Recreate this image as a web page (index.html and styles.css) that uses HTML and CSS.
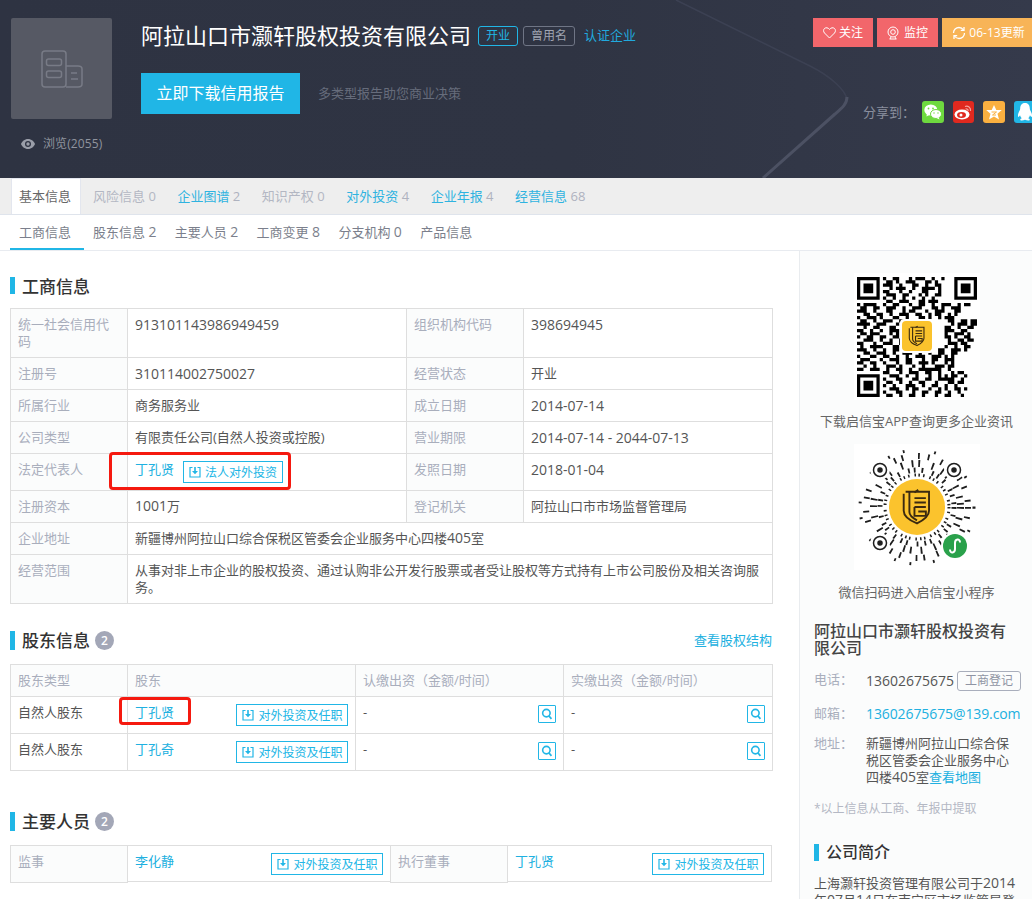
FILE: index.html
```html
<!DOCTYPE html>
<html lang="zh-CN">
<head>
<meta charset="utf-8">
<title>阿拉山口市灏轩股权投资有限公司</title>
<link rel="stylesheet" href="styles.css">
</head>
<body>
<svg class="defs" width="0" height="0" aria-hidden="true">
  <symbol id="shield" viewBox="0 0 30 30">
    <g fill="none" stroke="#3b2a10" stroke-width="1.5">
      <path d="M6 3H24.500V18C24.500 23 19 26 15 28C10 26 4.500 23 4.500 18V4.500"/>
      <path d="M9 3V19C9 22 12 24 15 25.500"/>
      <path d="M13 3.500L16 1.500M13 8H22M13 11.500H22M13 15H22M13 15V22H22V18.500H16"/>
    </g>
  </symbol>
  <symbol id="dl" viewBox="0 0 12 12">
    <path d="M3.500 1.500H1V11H11V1.500H8.500" fill="none" stroke="currentColor" stroke-width="1.200"/>
    <path d="M5.200 1H6.800V5H9L6 8.200L3 5H5.200Z" fill="currentColor"/>
  </symbol>
  <symbol id="mag" viewBox="0 0 18 18">
    <circle cx="8.300" cy="8" r="4.200" fill="none" stroke="currentColor" stroke-width="1.800"/>
    <path d="M11 11L14 14.500" stroke="currentColor" stroke-width="2"/>
  </symbol>
</svg>

<header class="hero">
  <svg class="hero-bg" viewBox="0 0 1032 178" aria-hidden="true">
    <path d="M676 0L810 66C830 76 846 90 847 100C847 104 842 108 835 114L763 178" fill="none" stroke="#3c4153" stroke-width="1.500"/>
    <path d="M847 97C847 104 842 108 835 114L763 178" fill="none" stroke="#4c5163" stroke-width="3"/>
  </svg>
  <div class="hero-left">
    <div class="logo">
      <svg width="42" height="38" viewBox="0 0 42 38" fill="none" stroke="#787b86" stroke-width="1.500">
        <rect x="1" y="1" width="24" height="36" rx="3"/>
        <rect x="5.500" y="9" width="15" height="6.500" rx="2"/>
        <rect x="5.500" y="21" width="15" height="6.500" rx="2"/>
        <path d="M25 16H37C39 16 41 17 41 19V34C41 36 39 37 37 37H25"/>
        <path d="M30 23H36M30 29H37"/>
      </svg>
    </div>
    <div class="views">
      <svg width="14" height="10" viewBox="0 0 14 10"><path d="M7 0C3.500 0 1 2.500 0 5C1 7.500 3.500 10 7 10S13 7.500 14 5C13 2.500 10.500 0 7 0Z" fill="#9a9ea9"/><circle cx="7" cy="5" r="3" fill="#2e3342"/><circle cx="7" cy="5" r="1.700" fill="#9a9ea9"/></svg>
      <span>浏览(2055)</span>
    </div>
  </div>
  <div class="hero-main">
    <div class="title-row">
      <h1 class="company">阿拉山口市灏轩股权投资有限公司</h1>
      <span class="tag tag-blue">开业</span>
      <span class="tag tag-gray">曾用名</span>
      <a class="verify">认证企业</a>
    </div>
    <div class="cta-row">
      <a class="cta">立即下载信用报告</a>
      <span class="cta-hint">多类型报告助您商业决策</span>
    </div>
  </div>
  <div class="hero-right">
    <div class="actions">
      <a class="act act-red act-follow">
        <svg width="13" height="12" viewBox="0 0 13 12"><path d="M6.500 11L1.500 6C.2 4.600.3 2.500 1.600 1.400C3 .3 5 .6 6.500 2.400C8 .6 10 .3 11.400 1.400C12.700 2.500 12.800 4.600 11.500 6Z" fill="none" stroke="#fff"/></svg>
        关注
      </a>
      <a class="act act-red act-watch">
        <svg width="12" height="14" viewBox="0 0 12 14" fill="none" stroke="#fff"><circle cx="6" cy="6" r="5"/><circle cx="6" cy="6" r="2.300"/><path d="M2.500 13H9.500M4 11L3 13M8 11L9 13"/></svg>
        监控
      </a>
      <a class="act act-orange">
        <svg width="14" height="14" viewBox="0 0 14 14" fill="none" stroke="#fff" stroke-width="1.300"><path d="M1.500 7C1.500 3.800 4 1.500 7 1.500C9 1.500 10.500 2.500 11.500 4M12.500 7C12.500 10.200 10 12.500 7 12.500C5 12.500 3.500 11.500 2.500 10"/><path d="M12 1V4.300H8.800M2 13V9.700H5.200"/></svg>
        06-13更新
      </a>
    </div>
    <div class="share">
      <span class="share-label">分享到：</span>
      <a class="soc soc-wx"><svg width="18" height="16" viewBox="0 0 18 16" fill="#fff"><ellipse cx="6.800" cy="6" rx="6.500" ry="5.500"/><path d="M3 9L2.500 12.500L6 10.500Z"/><ellipse cx="12" cy="10" rx="5.500" ry="4.500" stroke="#6ed93f"/><path d="M14.500 13L15.500 15.500L12.500 14Z"/><circle cx="4.500" cy="4.500" r=".9" fill="#6ed93f"/><circle cx="9" cy="4.500" r=".9" fill="#6ed93f"/><circle cx="10" cy="9" r=".7" fill="#6ed93f"/><circle cx="14" cy="9" r=".7" fill="#6ed93f"/></svg></a>
      <a class="soc soc-wb"><svg width="19" height="16" viewBox="0 0 19 16"><ellipse cx="8" cy="10.500" rx="7.500" ry="5" fill="#fff"/><ellipse cx="7.500" cy="11" rx="4.500" ry="3" fill="#e0291f"/><circle cx="7" cy="11" r="1.500" fill="#fff"/><path d="M11 2.500C14 1.500 17 3.500 16.500 7M11.500 5C13 4.500 14.500 5.500 14 7" fill="none" stroke="#f3a6a0" stroke-width="1.200"/></svg></a>
      <a class="soc soc-star"><svg width="16" height="15" viewBox="0 0 16 15"><path d="M8 0L10.300 5H15.800L11.500 8.700L13 14.500L8 11.500L3 14.500L4.500 8.700L.2 5H5.700Z" fill="#fff"/><path d="M5.500 7H10.500L6.500 10H10" fill="none" stroke="#fbb040"/></svg></a>
      <a class="soc soc-qq"><svg width="16" height="18" viewBox="0 0 16 18" fill="#fff"><path d="M8 0C4.500 0 3.200 2.500 3.200 5.500C3.200 7 2 8.500 1.300 10.500C.7 12.500 1 14 1.500 14C2 14 2.700 13 3 12.300C3.300 13.500 4 14.500 4.800 15.200C3.800 15.600 3 16.200 3.300 17C3.800 18 6.500 17.500 8 16.800C9.500 17.500 12.200 18 12.700 17C13 16.200 12.200 15.600 11.200 15.200C12 14.500 12.700 13.500 13 12.300C13.300 13 14 14 14.500 14C15 14 15.300 12.500 14.700 10.500C14 8.500 12.800 7 12.800 5.500C12.800 2.500 11.500 0 8 0Z"/></svg></a>
    </div>
  </div>
</header>

<nav class="tabs">
  <a class="tab tab-active">基本信息</a>
  <a class="tab tab-off">风险信息 0</a>
  <a class="tab tab-on">企业图谱 <span class="count">2</span></a>
  <a class="tab tab-off">知识产权 0</a>
  <a class="tab tab-on">对外投资 <span class="count">4</span></a>
  <a class="tab tab-on">企业年报 <span class="count">4</span></a>
  <a class="tab tab-on">经营信息 <span class="count">68</span></a>
</nav>
<nav class="subtabs">
  <a class="subtab subtab-active">工商信息</a>
  <a class="subtab">股东信息 <span class="num">2</span></a>
  <a class="subtab">主要人员 <span class="num">2</span></a>
  <a class="subtab">工商变更 <span class="num">8</span></a>
  <a class="subtab">分支机构 <span class="num">0</span></a>
  <a class="subtab">产品信息</a>
</nav>

<div class="page">
  <main class="content">
    <section class="section section-a">
      <h2 class="sec-title">工商信息</h2>
      <table class="grid">
        <colgroup><col class="c-117"><col class="c-279"><col class="c-117"><col class="c-249"></colgroup>
        <tr><th>统一社会信用代码</th><td class="num-cell">913101143986949459</td><th>组织机构代码</th><td class="num-cell">398694945</td></tr>
        <tr><th>注册号</th><td class="num-cell">310114002750027</td><th>经营状态</th><td>开业</td></tr>
        <tr><th>所属行业</th><td>商务服务业</td><th>成立日期</th><td class="num-cell">2014-07-14</td></tr>
        <tr><th>公司类型</th><td>有限责任公司(自然人投资或控股)</td><th>营业期限</th><td class="num-cell">2014-07-14 - 2044-07-13</td></tr>
        <tr><th>法定代表人</th>
          <td class="anchor">
            <div class="legal"><a class="link">丁孔贤</a><a class="btn"><svg class="dl"><use href="#dl"/></svg>法人对外投资</a></div>
            <span class="mark mark-legal"></span>
          </td>
          <th>发照日期</th><td class="num-cell">2018-01-04</td></tr>
        <tr><th>注册资本</th><td><span class="num">1001</span>万</td><th>登记机关</th><td>阿拉山口市市场监督管理局</td></tr>
        <tr><th>企业地址</th><td colspan="3">新疆博州阿拉山口综合保税区管委会企业服务中心四楼<span class="num">405</span>室</td></tr>
        <tr><th>经营范围</th><td colspan="3">从事对非上市企业的股权投资、通过认购非公开发行股票或者受让股权等方式持有上市公司股份及相关咨询服务。</td></tr>
      </table>
    </section>

    <section class="section section-b">
      <div class="sec-head">
        <h2 class="sec-title">股东信息<span class="badge">2</span></h2>
        <a class="link">查看股权结构</a>
      </div>
      <table class="grid">
        <colgroup><col class="c-117"><col class="c-228"><col class="c-208"><col class="c-209"></colgroup>
        <tr><th>股东类型</th><th>股东</th><th>认缴出资（金额/时间）</th><th>实缴出资（金额/时间）</th></tr>
        <tr><td>自然人股东</td>
          <td class="anchor"><div class="split"><a class="link">丁孔贤</a><a class="btn"><svg class="dl"><use href="#dl"/></svg>对外投资及任职</a></div><span class="mark mark-holder"></span></td>
          <td><div class="split"><span>-</span><a class="mag"><svg><use href="#mag"/></svg></a></div></td>
          <td><div class="split"><span>-</span><a class="mag"><svg><use href="#mag"/></svg></a></div></td></tr>
        <tr><td>自然人股东</td>
          <td><div class="split"><a class="link">丁孔奇</a><a class="btn"><svg class="dl"><use href="#dl"/></svg>对外投资及任职</a></div></td>
          <td><div class="split"><span>-</span><a class="mag"><svg><use href="#mag"/></svg></a></div></td>
          <td><div class="split"><span>-</span><a class="mag"><svg><use href="#mag"/></svg></a></div></td></tr>
      </table>
    </section>

    <section class="section">
      <h2 class="sec-title">主要人员<span class="badge">2</span></h2>
      <div class="people">
        <div class="p-label">监事</div>
        <div class="p-value p-value-a"><a class="link">李化静</a><a class="btn"><svg class="dl"><use href="#dl"/></svg>对外投资及任职</a></div>
        <div class="p-label">执行董事</div>
        <div class="p-value p-value-b"><a class="link">丁孔贤</a><a class="btn"><svg class="dl"><use href="#dl"/></svg>对外投资及任职</a></div>
      </div>
    </section>
  </main>

  <aside class="side">
    <div class="code">
      <svg class="code-svg" viewBox="0 0 126 127" aria-hidden="true">
        <g transform="translate(3 4) scale(3.243)">
          <path fill-rule="evenodd" d="M0 0h7v7h-7zM1 1v5h5v-5zM2 2h3v3h-3zM30 0h7v7h-7zM31 1v5h5v-5zM32 2h3v3h-3zM0 30h7v7h-7zM1 31v5h5v-5zM2 32h3v3h-3z"/>
          <path fill="none" stroke="#000" d="M8 .5h1m2 0h2m3 0h1m1 0h3m2 0h1m2 0h1
            M9 1.500h2m1 0h1m2 0h3m3 0h2m1 0h1
            M8 2.500h3m2 0h1m3 0h2m2 0h1m2 0h2
            M10 3.500h1m1 0h3m2 0h1m2 0h4m1 0h1
            M8 4.500h2m3 0h1m2 0h1m3 0h2m3 0h1
            M9 5.500h3m2 0h2m3 0h1m1 0h1m2 0h2
            M8 6.500h1m2 0h1m2 0h1m2 0h1m2 0h1m2 0h1
            M9 7.500h2m2 0h3m3 0h2m1 0h3
            M0 8.500h1m1 0h4m2 0h1m2 0h2m3 0h1m2 0h2m2 0h1m2 0h3m2 0h1m1 0h2
            M1 9.500h2m2 0h2m2 0h3m2 0h1m2 0h3m3 0h2m1 0h1m2 0h3
            M0 10.500h3m2 0h1m3 0h2m3 0h1m1 0h2m3 0h1m2 0h3m3 0h2
            M2 11.500h2m2 0h2m2 0h1m2 0h3m2 0h2m2 0h1m1 0h2m2 0h1m1 0h1
            M0 12.500h1m2 0h3m1 0h1m3 0h2m2 0h1m3 0h2m1 0h1m2 0h1m1 0h3
            M1 13.500h2m2 0h1m2 0h3m2 0h2m13 0h2m2 0h2m1 0h2
            M0 14.500h4m2 0h3m3 0h1m16 0h1m1 0h3m1 0h2
            M2 15.500h1m2 0h2m3 0h2m15 0h2m2 0h1m2 0h2
            M0 16.500h2m2 0h1m2 0h1m2 0h3m14 0h3m2 0h2
            M1 17.500h2m1 0h3m3 0h1m1 0h1m14 0h1m2 0h3m1 0h1
            M0 18.500h1m2 0h2m2 0h2m2 0h2m14 0h2m1 0h1m2 0h2
            M2 19.500h3m2 0h1m2 0h1m2 0h1m14 0h1m2 0h2m1 0h2
            M0 20.500h2m3 0h1m2 0h3m2 0h1m14 0h3m1 0h2
            M1 21.500h1m2 0h4m3 0h2m14 0h1m2 0h1m2 0h2
            M0 22.500h3m2 0h1m2 0h1m2 0h2m2 0h1m9 0h2m2 0h3m1 0h1
            M2 23.500h2m2 0h3m2 0h1m2 0h3m2 0h1m2 0h1m2 0h2m2 0h2
            M0 24.500h1m3 0h2m2 0h2m2 0h1m2 0h1m2 0h3m2 0h3m1 0h1m1 0h1
            M1 25.500h3m3 0h1m2 0h3m2 0h2m3 0h1m2 0h2m2 0h3
            M0 26.500h2m2 0h2m2 0h1m3 0h1m2 0h2m2 0h3m1 0h1m3 0h1m1 0h1
            M2 27.500h1m2 0h1m3 0h3m1 0h1m3 0h1m2 0h1m3 0h3m1 0h2
            M0 28.500h2m2 0h3m2 0h1m2 0h2m2 0h1m2 0h7m2 0h1
            M8 29.500h2m3 0h1m2 0h3m2 0h2m2 0h1m3 0h1m1 0h2
            M10 30.500h3m2 0h1m2 0h1m3 0h1m2 0h1m1 0h1m1 0h2m2 0h1
            M8 31.500h1m3 0h2m3 0h2m2 0h2m2 0h5m2 0h1
            M9 32.500h2m2 0h1m2 0h1m2 0h2m3 0h1m3 0h2m1 0h2
            M8 33.500h1m2 0h1m3 0h3m2 0h1m2 0h2m2 0h1m2 0h1
            M10 34.500h3m2 0h1m1 0h2m3 0h1m2 0h1m1 0h1m2 0h2m1 0h1
            M8 35.500h1m3 0h2m3 0h1m2 0h2m2 0h2m2 0h1m2 0h1
            M9 36.500h2m2 0h1m2 0h2m2 0h1m3 0h1m2 0h2m3 0h1"/>
        </g>
        <rect x="46" y="46" width="34" height="34" rx="4" fill="#fff"/>
        <rect x="48" y="48" width="30" height="30" rx="4" fill="#fbc32d"/>
        <use href="#shield" x="52" y="52" width="22" height="22"/>
      </svg>
    </div>
    <p class="code-cap cap-app">下载启信宝APP查询更多企业资讯</p>
    <div class="code code-mini">
      <svg class="code-svg" viewBox="0 0 126 126" aria-hidden="true">
        <g fill="none" stroke="#1e1e1e">
          <circle cx="63" cy="63" r="32" stroke-width="3" stroke-dasharray="1.500 3.200 1.500 5 1.500 2.500"/>
          <circle cx="63" cy="63" r="37" stroke-width="5" stroke-dasharray="1.800 6 1.800 9 1.800 4"/>
          <circle cx="63" cy="63" r="43.500" stroke-width="7" stroke-dasharray="1.800 9 1.800 5 1.800 12"/>
          <circle cx="63" cy="63" r="51" stroke-width="6" stroke-dasharray="1.800 8 1.800 12 1.800 6 1.800 15"/>
          <circle cx="63" cy="63" r="57" stroke-width="3" stroke-dasharray="1.800 22 1.800 14 1.800 30"/>
        </g>
        <g fill="#fff" stroke="#1e1e1e" stroke-width="1.500">
          <circle cx="26" cy="26" r="10" stroke="none"/><circle cx="26" cy="26" r="6.500"/><circle cx="26" cy="26" r="2" fill="#1e1e1e"/>
          <circle cx="100" cy="26" r="10" stroke="none"/><circle cx="100" cy="26" r="6.500"/><circle cx="100" cy="26" r="2" fill="#1e1e1e"/>
          <circle cx="26" cy="99" r="10" stroke="none"/><circle cx="26" cy="99" r="6.500"/><circle cx="26" cy="99" r="2" fill="#1e1e1e"/>
        </g>
        <circle cx="63" cy="63" r="28" fill="#fbc32d"/>
        <use href="#shield" x="44" y="44" width="38" height="38"/>
        <circle cx="101" cy="102" r="14" fill="#fff"/>
        <circle cx="101" cy="102" r="12" fill="#2aa14b"/>
        <path d="M96 105.500C96 110 101 109 101 105V99C101 95 106 94 106 98.500" fill="none" stroke="#fff" stroke-width="2"/>
      </svg>
    </div>
    <p class="code-cap cap-mini">微信扫码进入启信宝小程序</p>

    <h3 class="side-name">阿拉山口市灏轩股权投资有限公司</h3>
    <dl class="contact">
      <div class="c-row c-phone"><dt>电话：</dt><dd><span class="num">13602675675</span><span class="src">工商登记</span></dd></div>
      <div class="c-row c-mail"><dt>邮箱：</dt><dd><a class="link mail">13602675675@139.com</a></dd></div>
      <div class="c-row"><dt>地址：</dt><dd>新疆博州阿拉山口综合保税区管委会企业服务中心四楼<span class="num">405</span>室<a class="link">查看地图</a></dd></div>
    </dl>
    <p class="note">*以上信息从工商、年报中提取</p>
    <h2 class="sec-title side-title">公司简介</h2>
    <p class="intro">上海灏轩投资管理有限公司于<span class="num">2014</span>年<span class="num">07</span>月<span class="num">14</span>日在南宁区市场监管局登记成立。</p>
  </aside>
</div>
</body>
</html>
```

FILE: styles.css
```css
* { box-sizing: border-box; }
html, body { margin: 0; height: 899px; overflow: hidden; background: #fff; }
body {
  font-family: "Open Sans", "Noto Sans CJK SC", sans-serif;
  font-size: 13px;
  line-height: 17px;
  color: #555;
}
a { text-decoration: none; }
h1, h2, h3, p, dl, dd { margin: 0; font-weight: 400; }
.defs { position: absolute; }
.num { font-size: 14px; line-height: 1; }
.num-cell { font-size: 14px; }

/* hero */
.hero {
  position: relative;
  display: flex;
  align-items: flex-start;
  height: 178px;
  padding: 18px 0 0 11px;
  overflow: hidden;
  background: linear-gradient(90deg, #2e3342 0%, #2f3443 55%, #353a4b 100%);
}
.hero-bg { position: absolute; left: 0; top: 0; width: 1032px; height: 178px; }
.hero-left, .hero-main, .hero-right { position: relative; flex: none; }
.hero-left { width: 101px; }
.logo {
  display: flex; align-items: center; justify-content: center;
  width: 101px; height: 101px; border-radius: 2px; background: #565964;
}
.views { display: flex; align-items: center; gap: 8px; margin: 16px 0 0 10px; color: #8f939e; font-size: 12px; letter-spacing: .1px; white-space: nowrap; }
.hero-main { width: 672px; margin-left: 29px; }
.title-row { display: flex; align-items: center; height: 34px; white-space: nowrap; }
.company { font-size: 22px; line-height: 34px; color: #fff; }
.tag { display: inline-block; height: 20px; margin-top: 1px; line-height: 18px; padding: 0 7px; border: 1px solid; border-radius: 3px; font-size: 12px; }
.tag-blue { margin-left: 7px; color: #21b6e6; border-color: #21b6e6; }
.tag-gray { margin-left: 5px; color: #a0a5b2; border-color: #6f7585; }
.verify { margin-left: 9px; color: #21a9de; }
.cta-row { display: flex; align-items: center; margin-top: 21px; }
.cta { width: 159px; height: 41px; line-height: 41px; text-align: center; font-size: 16px; color: #fff; background: #20b6e6; }
.cta-hint { margin-left: 18px; color: #666c7b; }
.hero-right { width: 225px; }
.actions { display: flex; gap: 4px; }
.act {
  display: flex; align-items: center; justify-content: center; gap: 3px;
  height: 29px; font-size: 12px; color: #fff; white-space: nowrap; flex: none;
}
.act-red { background: #f2666b; }
.act-follow { width: 60px; }
.act-watch { width: 61px; gap: 5px; }
.act-orange { width: 93px; background: #f8b457; }
.share { display: flex; align-items: center; margin: 54px 0 0 50px; }
.share-label { flex: none; width: 59px; color: #8a8f9e; white-space: nowrap; }
.soc { display: flex; align-items: center; justify-content: center; flex: none; width: 22px; height: 22px; margin-right: 9px; border-radius: 3px; }
.soc-wx { background: #6ed93f; }
.soc-wb { background: #e0291f; width: 21px; }
.soc-star { background: #fbb040; }
.soc-qq { background: #21b6e6; }

/* tabs */
.tabs { display: flex; height: 37px; padding: 0 0 0 11px; background: #eee; border-bottom: 1px solid #dfe4ec; }
.tab { height: 36px; line-height: 36px; margin-right: 5.6px; padding: 0 8px; white-space: nowrap; }
.tab-active { width: 70px; margin-right: 4px; padding: 0 7px; background: #fff; color: #666; border: 1px solid #e3e6ee; border-bottom: 0; line-height: 35px; }
.tab-off { color: #b3b7c3; }
.tab-on { color: #2fb3e0; }
.count { color: #aeb2bf; }
.subtabs { display: flex; height: 36px; padding-left: 10px; border-bottom: 1px solid #e8ebf0; }
.subtab { height: 35px; line-height: 35px; padding: 0 9.4px 0 9px; color: #7b7f8c; white-space: nowrap; }
.subtab-active { width: 74px; border-bottom: 2px solid #20b6e6; }

/* page */
.page { display: flex; height: 648px; overflow: hidden; }
.content { flex: none; width: 799px; padding: 26px 0 0 10px; }
.section { width: 762px; }
.section-a { margin-bottom: 27px; }
.section-b { margin-bottom: 41px; }
.sec-title {
  display: flex; align-items: center; position: relative;
  margin: 0 0 14px; padding-left: 12px;
  font-size: 17px; line-height: 17px; font-weight: 500; color: #333;
}
.section-a .sec-title { padding-top: 2px; line-height: 15px; }
.sec-title::before { content: ""; position: absolute; left: 0; top: 0; bottom: 0; width: 5px; background: #20b6e6; }
.badge {
  display: inline-block; width: 19px; height: 19px; margin-left: 5px; border-radius: 50%;
  line-height: 19px; text-align: center; font-size: 12px; font-weight: 600; color: #fff; background: #a3a7b7;
}
.sec-head { display: flex; justify-content: space-between; align-items: flex-start; }
.sec-head .link { line-height: 19px; }

/* tables */
.grid { width: 762px; table-layout: fixed; border-collapse: collapse; }
.c-117 { width: 117px; }
.c-279 { width: 279px; }
.c-249 { width: 249px; }
.c-228 { width: 228px; }
.c-208 { width: 208px; }
.c-209 { width: 209px; }
.grid th, .grid td { padding: 7px 7px; border: 1px solid #dedede; vertical-align: top; text-align: left; font-weight: 400; }
.grid th { color: #a9aebc; background: #fbfcfc; }
.grid td { color: #555; }
.link { color: #21b0e0; }
.anchor { position: relative; }
.legal { display: flex; align-items: flex-start; gap: 9px; }
.split { display: flex; justify-content: space-between; align-items: flex-start; }
.btn {
  display: inline-flex; align-items: center; flex: none;
  height: 22px; padding: 0 4.5px 0 5px; border: 1px solid #21b6e6;
  font-size: 12px; color: #21b6e6; white-space: nowrap;
}
.dl { width: 12px; height: 12px; margin-right: 4px; color: #21b6e6; }
.mag { flex: none; display: block; width: 18px; height: 18px; margin-top: 1px; border: 1px solid #21b6e6; border-radius: 1px; color: #21b6e6; }
.mag svg { display: block; width: 16px; height: 16px; }
.mark { position: absolute; border: 3px solid #f5190f; border-radius: 4px; pointer-events: none; }
.mark-legal { left: -19px; top: -2px; width: 182px; height: 38px; }
.mark-holder { left: -9px; top: 0; width: 72px; height: 28px; }

/* people */
.people { display: flex; align-items: flex-start; }
.p-label { flex: none; width: 118px; height: 38px; padding: 7px; border: 1px solid #dedede; background: #fbfcfc; color: #a9aebc; }
.p-value { flex: none; display: flex; justify-content: space-between; align-items: flex-start; height: 37px; margin: 0 -1px; padding: 7px; border: 1px solid #dedede; }
.p-value-a { width: 264px; }
.p-value-b { width: 265px; margin-right: 0; }

/* sidebar */
.side { flex: none; width: 233px; height: 648px; padding: 22px 11px 0 14px; background: #fbfcfc; border-left: 1px solid #e9ecef; }
.code { width: 126px; height: 127px; margin: 0 0 0 40px; }
.code-mini { height: 126px; margin-top: 14px; }
.code-svg { display: block; width: 126px; height: 100%; background: #fff; }
.code-cap { margin-left: -14px; width: 233px; text-align: center; color: #666; white-space: nowrap; }
.cap-app { margin-top: 13px; }
.cap-mini { margin-top: 14px; }
.side-name { margin-top: 22px; font-size: 16px; line-height: 17px; font-weight: 500; color: #444; }
.contact { margin-top: 6px; }
.c-row { display: flex; margin-top: 8px; }
dt { flex: none; width: 52px; color: #a9aebc; }
dd { color: #555; }
.c-phone dd { display: flex; align-items: center; white-space: nowrap; }
.c-phone { margin-top: 14px; margin-bottom: 14px; }
.c-mail { margin-bottom: 12px; white-space: nowrap; }
.mail { font-size: 14px; letter-spacing: -.1px; }
.src { margin-left: 3px; padding: 0 7px; height: 20px; line-height: 18px; border: 1px solid #a9aebc; border-radius: 3px; font-size: 12px; color: #8f94a3; }
.note { margin-top: 14px; font-size: 12px; color: #b4b8c4; }
.side-title { margin-top: 27px; font-size: 16px; }
.intro { margin-top: 0; }
```
